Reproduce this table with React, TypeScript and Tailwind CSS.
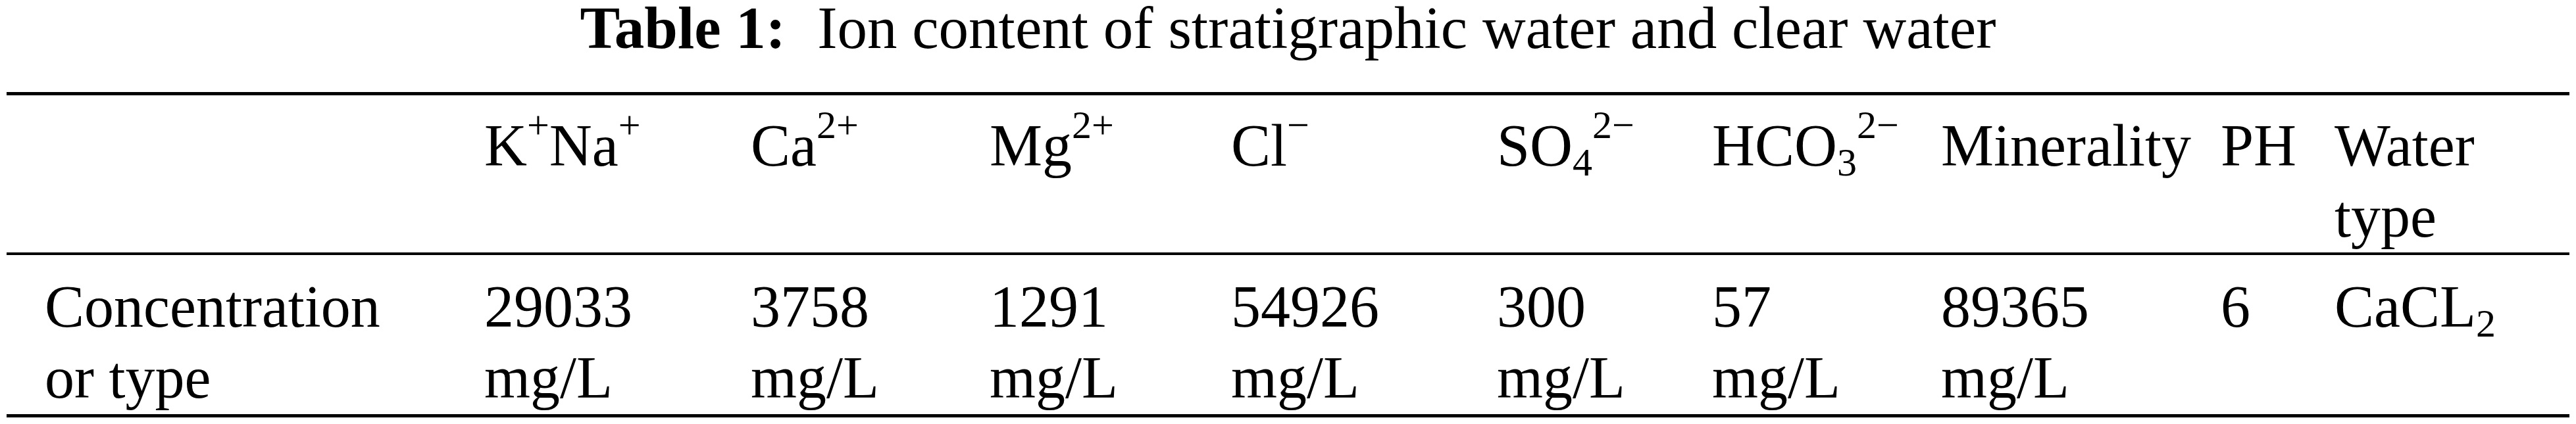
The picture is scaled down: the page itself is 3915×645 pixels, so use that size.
import React from 'react';

const Sup = ({ children }: { children: React.ReactNode }) => (
  <sup className="text-[60px] top-[-42px]">{children}</sup>
);

const Sub = ({ children }: { children: React.ReactNode }) => <sub className="text-[60px]">{children}</sub>;

const cols =
  'grid grid-cols-[668px_405px_363px_367px_404px_327px_348px_425px_173px_1fr] text-[90px] leading-[108px]';

const headers: React.ReactNode[] = [
  '',
  <>
    K<Sup>+</Sup>Na<Sup>+</Sup>
  </>,
  <>
    Ca<Sup>2+</Sup>
  </>,
  <>
    Mg<Sup>2+</Sup>
  </>,
  <>
    Cl<Sup>−</Sup>
  </>,
  <>
    SO<Sub>4</Sub>
    <Sup>2−</Sup>
  </>,
  <>
    HCO<Sub>3</Sub>
    <Sup>2−</Sup>
  </>,
  'Minerality',
  'PH',
  <>
    Water
    <br />
    type
  </>,
];

const values: React.ReactNode[] = [
  <>
    Concentration
    <br />
    or type
  </>,
  ...['29033', '3758', '1291', '54926', '300', '57', '89365'].map((v) => (
    <>
      {v}
      <br />
      mg/L
    </>
  )),
  '6',
  <>
    CaCL<Sub>2</Sub>
  </>,
];

export default function App() {
  return (
    <div className="w-[3915px] h-[645px] bg-white text-black [font-family:'Liberation_Serif',serif]">
      <div className="text-center text-[91px] leading-[85px] whitespace-nowrap">
        <span className="inline-block font-bold">Table 1:</span>
        <span className="inline-block ml-[48px]">Ion content of stratigraphic water and clear water</span>
      </div>

      <div className="mx-[10px] mt-[55px]">
        <div className="h-[5px] bg-black" />
        <div className={`${cols} pt-[23px]`}>
          {headers.map((h, i) => (
            <div key={i} className="pl-[58px] whitespace-nowrap">
              {h}
            </div>
          ))}
        </div>
        <div className="h-[4px] bg-black" />
        <div className={`${cols} pt-[25px] pb-[1px]`}>
          {values.map((v, i) => (
            <div key={i} className="pl-[58px] whitespace-nowrap">
              {v}
            </div>
          ))}
        </div>
        <div className="h-[5px] bg-black" />
      </div>
    </div>
  );
}
